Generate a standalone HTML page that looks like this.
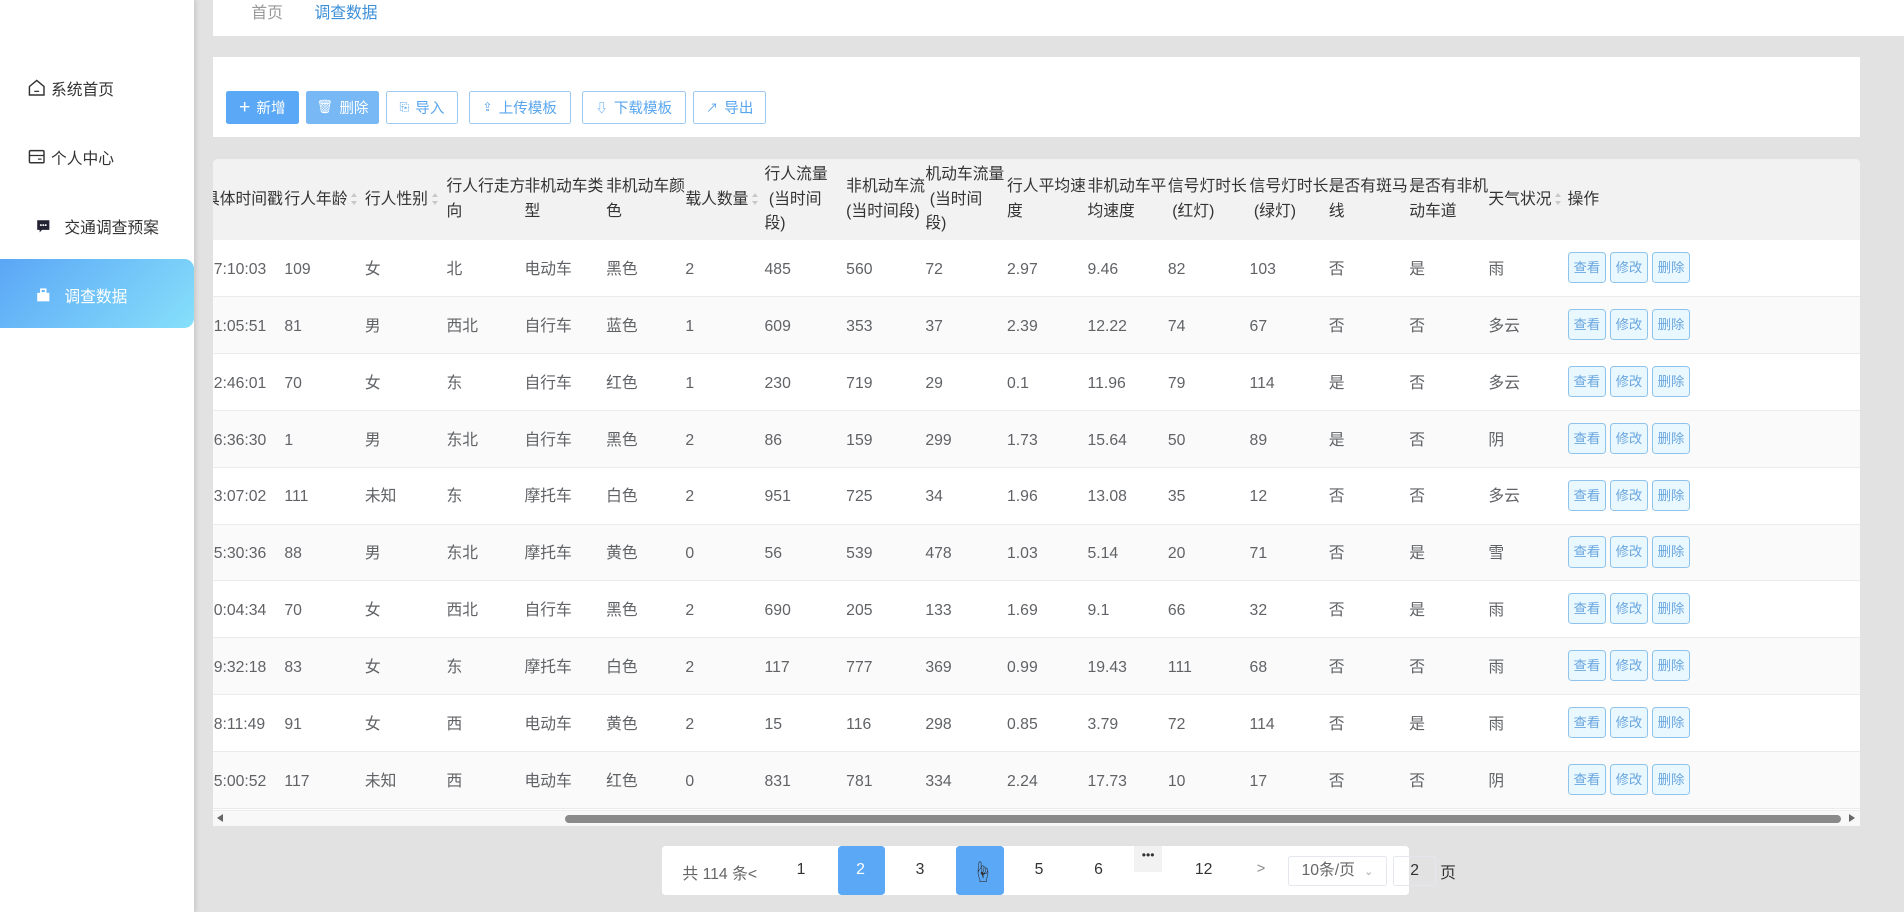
<!DOCTYPE html>
<html><head><meta charset="utf-8">
<style>
html{zoom:1.214286}
body{margin:0;width:1568px;height:751px;overflow:hidden;background:#e2e2e2;font-family:"Liberation Sans","Noto Sans CJK SC",sans-serif;font-size:13px;color:#606266;position:relative}
.abs{position:absolute}
.side{left:0;top:0;width:160px;height:751px;background:#fff;box-shadow:2px 0 3px #ccc}
.mi{position:absolute;font-size:13px;color:#333;display:flex;align-items:center;gap:4px}
.act{left:0;top:213px;width:160px;height:57px;border-radius:0 8px 8px 0;background:linear-gradient(135deg,#5ba6f6,#86e0fa)}
.box{background:#fff}
.btn{position:absolute;top:75px;height:27px;border-radius:2px;box-sizing:border-box;display:flex;align-items:center;justify-content:center;gap:5px;font-size:12px}
.bf{background:#5aa8f6;color:#fff}
.bl{background:#77b8f5;color:#fff}
.bo{border:1px solid #9cc9f2;color:#5aa6ee;background:#fff}
table{border-collapse:collapse;table-layout:fixed;position:absolute;left:0;top:0;width:1357px}
td,th{padding:0 0 0 1px;white-space:nowrap;overflow:visible;text-align:left;vertical-align:middle}
th{height:67px;font-weight:normal;color:#333;line-height:20px;background:#f2f2f2}
td{height:43px;line-height:20px;border-bottom:1px solid #e9ebef;padding-top:3px}
tr.s td{background:#fafafa}
.car{display:inline-block;width:6px;height:10px;vertical-align:middle;margin-left:3px;position:relative}
.car:before{content:"";position:absolute;left:0;top:0;border:3px solid transparent;border-bottom:4px solid #c8c8c8;border-top:0}
.car:after{content:"";position:absolute;left:0;top:6px;border:3px solid transparent;border-top:4px solid #c8c8c8;border-bottom:0}
.ob{display:inline-block;width:30px;height:24px;line-height:24px;text-align:center;border:1px solid #8ec4ec;border-radius:3px;background:#e9f8ff;color:#6aa6df;font-size:11px;margin-right:3px;vertical-align:middle;position:relative;top:-2px}
.pg{position:absolute;top:709px;font-size:13px;color:#333}
</style></head><body>
<div class="abs side"></div>
<div class="mi" style="left:22px;top:63px"><svg width="16" height="16" viewBox="0 0 16 16"><path d="M2 7L8 2l6 5v7H2z" fill="none" stroke="#333" stroke-width="1.2"/><path d="M6 11h4" stroke="#333"/></svg>系统首页</div>
<div class="mi" style="left:22px;top:120px"><svg width="16" height="16" viewBox="0 0 16 16"><rect x="2" y="3" width="12" height="10" rx="1" fill="none" stroke="#333" stroke-width="1.2"/><path d="M2 7h12M9 10h3" stroke="#333"/></svg>个人中心</div>
<div class="mi" style="left:30px;top:177px;gap:11px"><svg width="12" height="12" viewBox="0 0 12 12"><path d="M1 1h10v8H5l-2 2V9H1z" fill="#223"/><circle cx="4" cy="5" r=".8" fill="#fff"/><circle cx="6" cy="5" r=".8" fill="#fff"/><circle cx="8" cy="5" r=".8" fill="#fff"/></svg>交通调查预案</div>
<div class="abs act"></div>
<div class="mi" style="left:30px;top:234px;gap:11px;color:#fff"><svg width="12" height="12" viewBox="0 0 12 12"><rect x="4" y="1" width="4" height="3" fill="none" stroke="#fff" stroke-width="1.3"/><rect x="1" y="4" width="10" height="7" fill="#fff"/></svg>调查数据</div>

<div class="abs box" style="left:175px;top:0;width:1393px;height:30px"></div>
<div class="abs" style="left:207px;top:0;color:#999;font-size:13px">首页</div>
<div class="abs" style="left:259px;top:0;color:#3d8fd8;font-size:13px">调查数据</div>

<div class="abs box" style="left:175px;top:47px;width:1357px;height:66px"></div>
<div class="btn bf" style="left:186px;width:60px"><span style="font-size:16px">+</span>新增</div>
<div class="btn bl" style="left:252px;width:60px"><span style="font-size:11px">🗑</span>删除</div>
<div class="btn bo" style="left:318px;width:59px"><span style="font-size:10px">⎘</span>导入</div>
<div class="btn bo" style="left:386px;width:84px"><span style="font-size:10px">⇪</span>上传模板</div>
<div class="btn bo" style="left:479px;width:86px"><span style="font-size:10px">⇩</span>下载模板</div>
<div class="btn bo" style="left:571px;width:60px"><span style="font-size:10px">↗</span>导出</div>

<div class="abs box" style="left:175px;top:131px;width:1357px;height:549px;overflow:hidden;border-radius:4px 4px 0 0">
<table>
<colgroup><col style="width:58px"><col style="width:66px"><col style="width:67px"><col style="width:64px"><col style="width:67px"><col style="width:65px"><col style="width:65px"><col style="width:67px"><col style="width:65px"><col style="width:67px"><col style="width:66px"><col style="width:66px"><col style="width:67px"><col style="width:65px"><col style="width:66px"><col style="width:65px"><col style="width:65px"><col style="width:241px"></colgroup>
<tr><th><span style="margin-left:-8px">具体时间戳</span></th><th>行人年龄<i class="car"></i></th><th>行人性别<i class="car"></i></th><th>行人行走方<br>向</th><th>非机动车类<br>型</th><th>非机动车颜<br>色</th><th>载人数量<i class="car"></i></th><th>行人流量<br>&nbsp;(当时间<br>段)</th><th>非机动车流<br>(当时间段)</th><th>机动车流量<br>&nbsp;(当时间<br>段)</th><th>行人平均速<br>度</th><th>非机动车平<br>均速度</th><th>信号灯时长<br>&nbsp;(红灯)</th><th>信号灯时长<br>&nbsp;(绿灯)</th><th>是否有斑马<br>线</th><th>是否有非机<br>动车道</th><th>天气状况<i class="car"></i></th><th>操作</th></tr>
<tr><td>7:10:03</td><td>109</td><td>女</td><td>北</td><td>电动车</td><td>黑色</td><td>2</td><td>485</td><td>560</td><td>72</td><td>2.97</td><td>9.46</td><td>82</td><td>103</td><td>否</td><td>是</td><td>雨</td><td><span class="ob">查看</span><span class="ob">修改</span><span class="ob">删除</span></td></tr>
<tr class="s"><td>1:05:51</td><td>81</td><td>男</td><td>西北</td><td>自行车</td><td>蓝色</td><td>1</td><td>609</td><td>353</td><td>37</td><td>2.39</td><td>12.22</td><td>74</td><td>67</td><td>否</td><td>否</td><td>多云</td><td><span class="ob">查看</span><span class="ob">修改</span><span class="ob">删除</span></td></tr>
<tr><td>2:46:01</td><td>70</td><td>女</td><td>东</td><td>自行车</td><td>红色</td><td>1</td><td>230</td><td>719</td><td>29</td><td>0.1</td><td>11.96</td><td>79</td><td>114</td><td>是</td><td>否</td><td>多云</td><td><span class="ob">查看</span><span class="ob">修改</span><span class="ob">删除</span></td></tr>
<tr class="s"><td>6:36:30</td><td>1</td><td>男</td><td>东北</td><td>自行车</td><td>黑色</td><td>2</td><td>86</td><td>159</td><td>299</td><td>1.73</td><td>15.64</td><td>50</td><td>89</td><td>是</td><td>否</td><td>阴</td><td><span class="ob">查看</span><span class="ob">修改</span><span class="ob">删除</span></td></tr>
<tr><td>3:07:02</td><td>111</td><td>未知</td><td>东</td><td>摩托车</td><td>白色</td><td>2</td><td>951</td><td>725</td><td>34</td><td>1.96</td><td>13.08</td><td>35</td><td>12</td><td>否</td><td>否</td><td>多云</td><td><span class="ob">查看</span><span class="ob">修改</span><span class="ob">删除</span></td></tr>
<tr class="s"><td>5:30:36</td><td>88</td><td>男</td><td>东北</td><td>摩托车</td><td>黄色</td><td>0</td><td>56</td><td>539</td><td>478</td><td>1.03</td><td>5.14</td><td>20</td><td>71</td><td>否</td><td>是</td><td>雪</td><td><span class="ob">查看</span><span class="ob">修改</span><span class="ob">删除</span></td></tr>
<tr><td>0:04:34</td><td>70</td><td>女</td><td>西北</td><td>自行车</td><td>黑色</td><td>2</td><td>690</td><td>205</td><td>133</td><td>1.69</td><td>9.1</td><td>66</td><td>32</td><td>否</td><td>是</td><td>雨</td><td><span class="ob">查看</span><span class="ob">修改</span><span class="ob">删除</span></td></tr>
<tr class="s"><td>9:32:18</td><td>83</td><td>女</td><td>东</td><td>摩托车</td><td>白色</td><td>2</td><td>117</td><td>777</td><td>369</td><td>0.99</td><td>19.43</td><td>111</td><td>68</td><td>否</td><td>否</td><td>雨</td><td><span class="ob">查看</span><span class="ob">修改</span><span class="ob">删除</span></td></tr>
<tr><td>8:11:49</td><td>91</td><td>女</td><td>西</td><td>电动车</td><td>黄色</td><td>2</td><td>15</td><td>116</td><td>298</td><td>0.85</td><td>3.79</td><td>72</td><td>114</td><td>否</td><td>是</td><td>雨</td><td><span class="ob">查看</span><span class="ob">修改</span><span class="ob">删除</span></td></tr>
<tr class="s"><td>5:00:52</td><td>117</td><td>未知</td><td>西</td><td>电动车</td><td>红色</td><td>0</td><td>831</td><td>781</td><td>334</td><td>2.24</td><td>17.73</td><td>10</td><td>17</td><td>否</td><td>否</td><td>阴</td><td><span class="ob">查看</span><span class="ob">修改</span><span class="ob">删除</span></td></tr>
</table>
<div class="abs" style="left:0;top:536px;width:1357px;height:13px;background:#f8f8f8;border-top:1px solid #eee"></div>
<div class="abs" style="left:4px;top:539px;border:4px solid transparent;border-right:5px solid #666;border-left:0"></div>
<div class="abs" style="right:4px;top:539px;border:4px solid transparent;border-left:5px solid #666;border-right:0"></div>
<div class="abs" style="left:290px;top:540px;width:1051px;height:7px;border-radius:4px;background:#8a8a8a"></div>
</div>

<div class="abs box" style="left:545px;top:697px;width:615px;height:40px;border-radius:3px"></div>
<div class="pg" style="left:562px;top:709px;color:#666">共 114 条&lt;</div>
<div class="pg" style="left:656px">1</div>
<div class="abs" style="left:690px;top:697px;width:39px;height:40px;background:#5aa8f6;border-radius:3px"></div>
<div class="pg" style="left:705px;color:#fff">2</div>
<div class="pg" style="left:754px">3</div>
<div class="abs" style="left:787px;top:697px;width:40px;height:40px;background:#5aa8f6;border-radius:3px"></div>
<div class="pg" style="left:800px;top:705px;font-size:18px">☝</div>
<div class="pg" style="left:852px">5</div>
<div class="pg" style="left:901px">6</div>
<div class="abs" style="left:934px;top:697px;width:23px;height:21px;background:#f2f2f2;text-align:center;font-size:10px;color:#333;line-height:16px">•••</div>
<div class="pg" style="left:984px">12</div>
<div class="pg" style="left:1035px;color:#888;font-size:12px">&gt;</div>
<div class="abs" style="left:1061px;top:705px;width:81px;height:25px;border:1px solid #e4e7ed;box-sizing:border-box;border-radius:2px;font-size:13px;color:#666;line-height:23px;padding-left:10px">10条/页 <span style="font-size:9px;color:#aaa;margin-left:4px">⌄</span></div>
<div class="abs" style="left:1147px;top:705px;width:36px;height:25px;border:1px solid #e4e7ed;box-sizing:border-box;border-radius:2px;text-align:center;line-height:23px;color:#333">2</div>
<div class="pg" style="left:1186px;top:708px">页</div>
</body></html>
